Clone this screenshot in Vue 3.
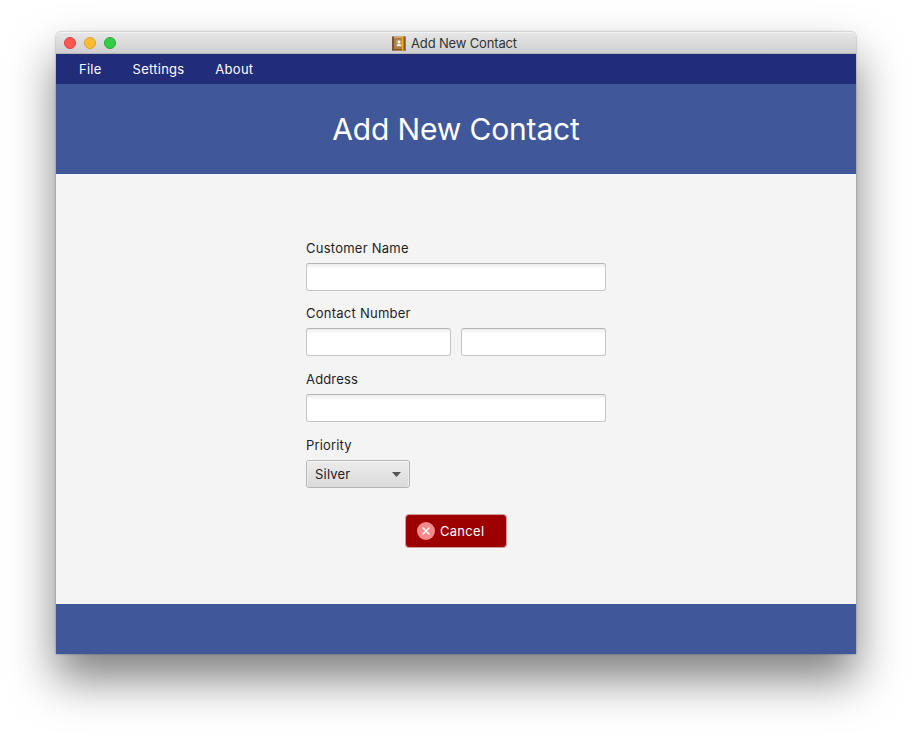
<script setup>
import { ref } from 'vue'

const menus = ['File', 'Settings', 'About']
const lights = ['close', 'minimize', 'maximize']
const name = ref('')
const phone = ref('')
const altPhone = ref('')
const address = ref('')
const priority = ref('Silver')
</script>

<template>
  <div class="desktop">
    <div class="window">
      <div class="titlebar">
        <div class="lights">
          <span v-for="l in lights" :key="l" class="light" :class="l"></span>
        </div>
        <div class="title">
          <svg class="book" width="14" height="15" viewBox="0 0 14 15">
            <rect x="0.5" y="0.5" width="13" height="14" rx="1" fill="#b17f4c" />
            <rect x="0" y="0.5" width="2" height="14" fill="#7a5230" />
            <rect x="2" y="0.5" width="8" height="1.5" fill="#c9a982" />
            <rect x="0.5" y="13" width="13" height="1.5" fill="#84552d" />
            <rect x="4" y="4" width="6" height="7" fill="#b9936b" />
            <circle cx="7" cy="6" r="1.4" fill="#fff" />
            <path d="M4.600 10 Q5 8 7 8 Q9 8 9.400 10 Z" fill="#fff" />
            <rect x="10" y="0" width="1.600" height="15" fill="#f5ae12" />
            <rect x="11.600" y="0.500" width="2" height="14" fill="#875a34" />
          </svg>
          <span class="title-text">Add New Contact</span>
        </div>
      </div>

      <nav class="menubar">
        <span v-for="m in menus" :key="m" class="menu">{{ m }}</span>
      </nav>

      <header class="header"><h1>Add New Contact</h1></header>

      <main class="content">
        <form class="form" @submit.prevent>
          <label class="label" for="name">Customer Name</label>
          <input id="name" v-model="name" class="field" type="text" />
          <label class="label number" for="phone">Contact Number</label>
          <div class="pair">
            <input id="phone" v-model="phone" class="field" type="text" />
            <input v-model="altPhone" class="field" type="text" />
          </div>
          <label class="label addr" for="address">Address</label>
          <input id="address" v-model="address" class="field" type="text" />
          <label class="label prio">Priority</label>
          <button type="button" class="combo">
            <span>{{ priority }}</span>
            <svg width="9" height="5" viewBox="0 0 9 5"><path d="M0 0H9L4.500 5Z" fill="#555" /></svg>
          </button>
          <button type="button" class="cancel">
            <svg width="18" height="18" viewBox="0 0 18 18">
              <circle cx="9" cy="9" r="9" fill="#f58a8a" />
              <path d="M5.600 5.600L12.400 12.400M12.400 5.600L5.600 12.400" stroke="#fff" stroke-width="1.400" />
            </svg>
            <span>Cancel</span>
          </button>
        </form>
      </main>

      <footer class="footer"></footer>
    </div>
  </div>
</template>

<style>
body { background: #fff; overflow: hidden; }
</style>

<style scoped>
.desktop {
  box-sizing: border-box;
  width: 912px;
  height: 734px;
  padding: 32px 56px 80px;
  font-family: Inter, "Liberation Sans", sans-serif;
  font-size: 13px;
  color: #1e1e1e;
}
.window {
  display: flex;
  flex-direction: column;
  height: 622px;
  border-radius: 5px 5px 0 0;
  box-shadow: 0 0 2px rgba(0, 0, 0, 0.45), 0 25px 46px rgba(0, 0, 0, 0.5);
}
.titlebar {
  box-sizing: border-box;
  position: relative;
  display: flex;
  align-items: center;
  justify-content: center;
  height: 22px;
  border-top: 1px solid #f4f4f4;
  border-bottom: 1px solid #b4b4b4;
  border-radius: 5px 5px 0 0;
  background: linear-gradient(#e6e6e6, #d0d0d0);
}
.lights {
  position: absolute;
  left: 8px;
  top: 4px;
  display: flex;
  gap: 8px;
}
.light {
  box-sizing: border-box;
  width: 12px;
  height: 12px;
  border-radius: 50%;
}
.close { background: #fd5754; border: 1px solid #df3e41; }
.minimize { background: #fdbd2e; border: 1px solid #dea032; }
.maximize { background: #35cd45; border: 1px solid #27aa35; }
.title {
  display: flex;
  align-items: center;
  gap: 5px;
  margin-left: -3px;
  color: #333;
}
.title-text { letter-spacing: -0.16px; }
.menubar {
  display: flex;
  align-items: center;
  gap: 30.9px;
  height: 30px;
  padding-left: 23px;
  background: #222d7a;
  color: #fff;
  letter-spacing: 0.27px;
}
.header {
  display: flex;
  align-items: center;
  justify-content: center;
  height: 90px;
  background: #40589a;
}
h1 {
  margin: 0;
  font-size: 30px;
  font-weight: 400;
  letter-spacing: -0.15px;
  color: #fff;
}
.content {
  flex: 1;
  display: flex;
  justify-content: center;
  background: #f4f4f4;
}
.form {
  display: flex;
  flex-direction: column;
  align-items: flex-start;
  width: 300px;
  padding-top: 66px;
}
.label {
  height: 16px;
  line-height: 16px;
  margin-bottom: 7px;
  letter-spacing: 0.25px;
}
.number { margin-top: 14px; }
.addr, .prio { margin-top: 15px; }
.addr, .prio { letter-spacing: 0.16px; }
.field {
  box-sizing: border-box;
  width: 100%;
  min-width: 0;
  height: 28px;
  padding: 4px 8px;
  border: 1px solid #c6c6c6;
  border-top-color: #b5b5b5;
  border-radius: 3px;
  background: linear-gradient(#ededed, #fff 5px);
  font: inherit;
  outline: none;
}
.pair {
  display: flex;
  gap: 10px;
  width: 100%;
}
.combo {
  box-sizing: border-box;
  display: flex;
  align-items: center;
  justify-content: space-between;
  width: 104px;
  height: 28px;
  padding: 0 8px;
  border: 1px solid #b5b5b5;
  border-radius: 3px;
  background: linear-gradient(#ececec, #dadada);
  box-shadow: inset 0 1px 0 #f8f8f8, inset 1px 0 0 #eee, inset -1px 0 0 #eee;
  font: inherit;
  letter-spacing: 0.2px;
  color: #222;
}
.cancel {
  box-sizing: border-box;
  display: flex;
  align-items: center;
  gap: 5px;
  width: 102px;
  height: 34px;
  margin-top: 26px;
  margin-left: 99px;
  padding: 0 0 1px 11px;
  border: 1px solid #d79a9a;
  border-radius: 4px;
  background: #9c0000;
  font: inherit;
  letter-spacing: 0.28px;
  color: #fff;
}
.footer {
  height: 50px;
  background: #40589a;
}
</style>
